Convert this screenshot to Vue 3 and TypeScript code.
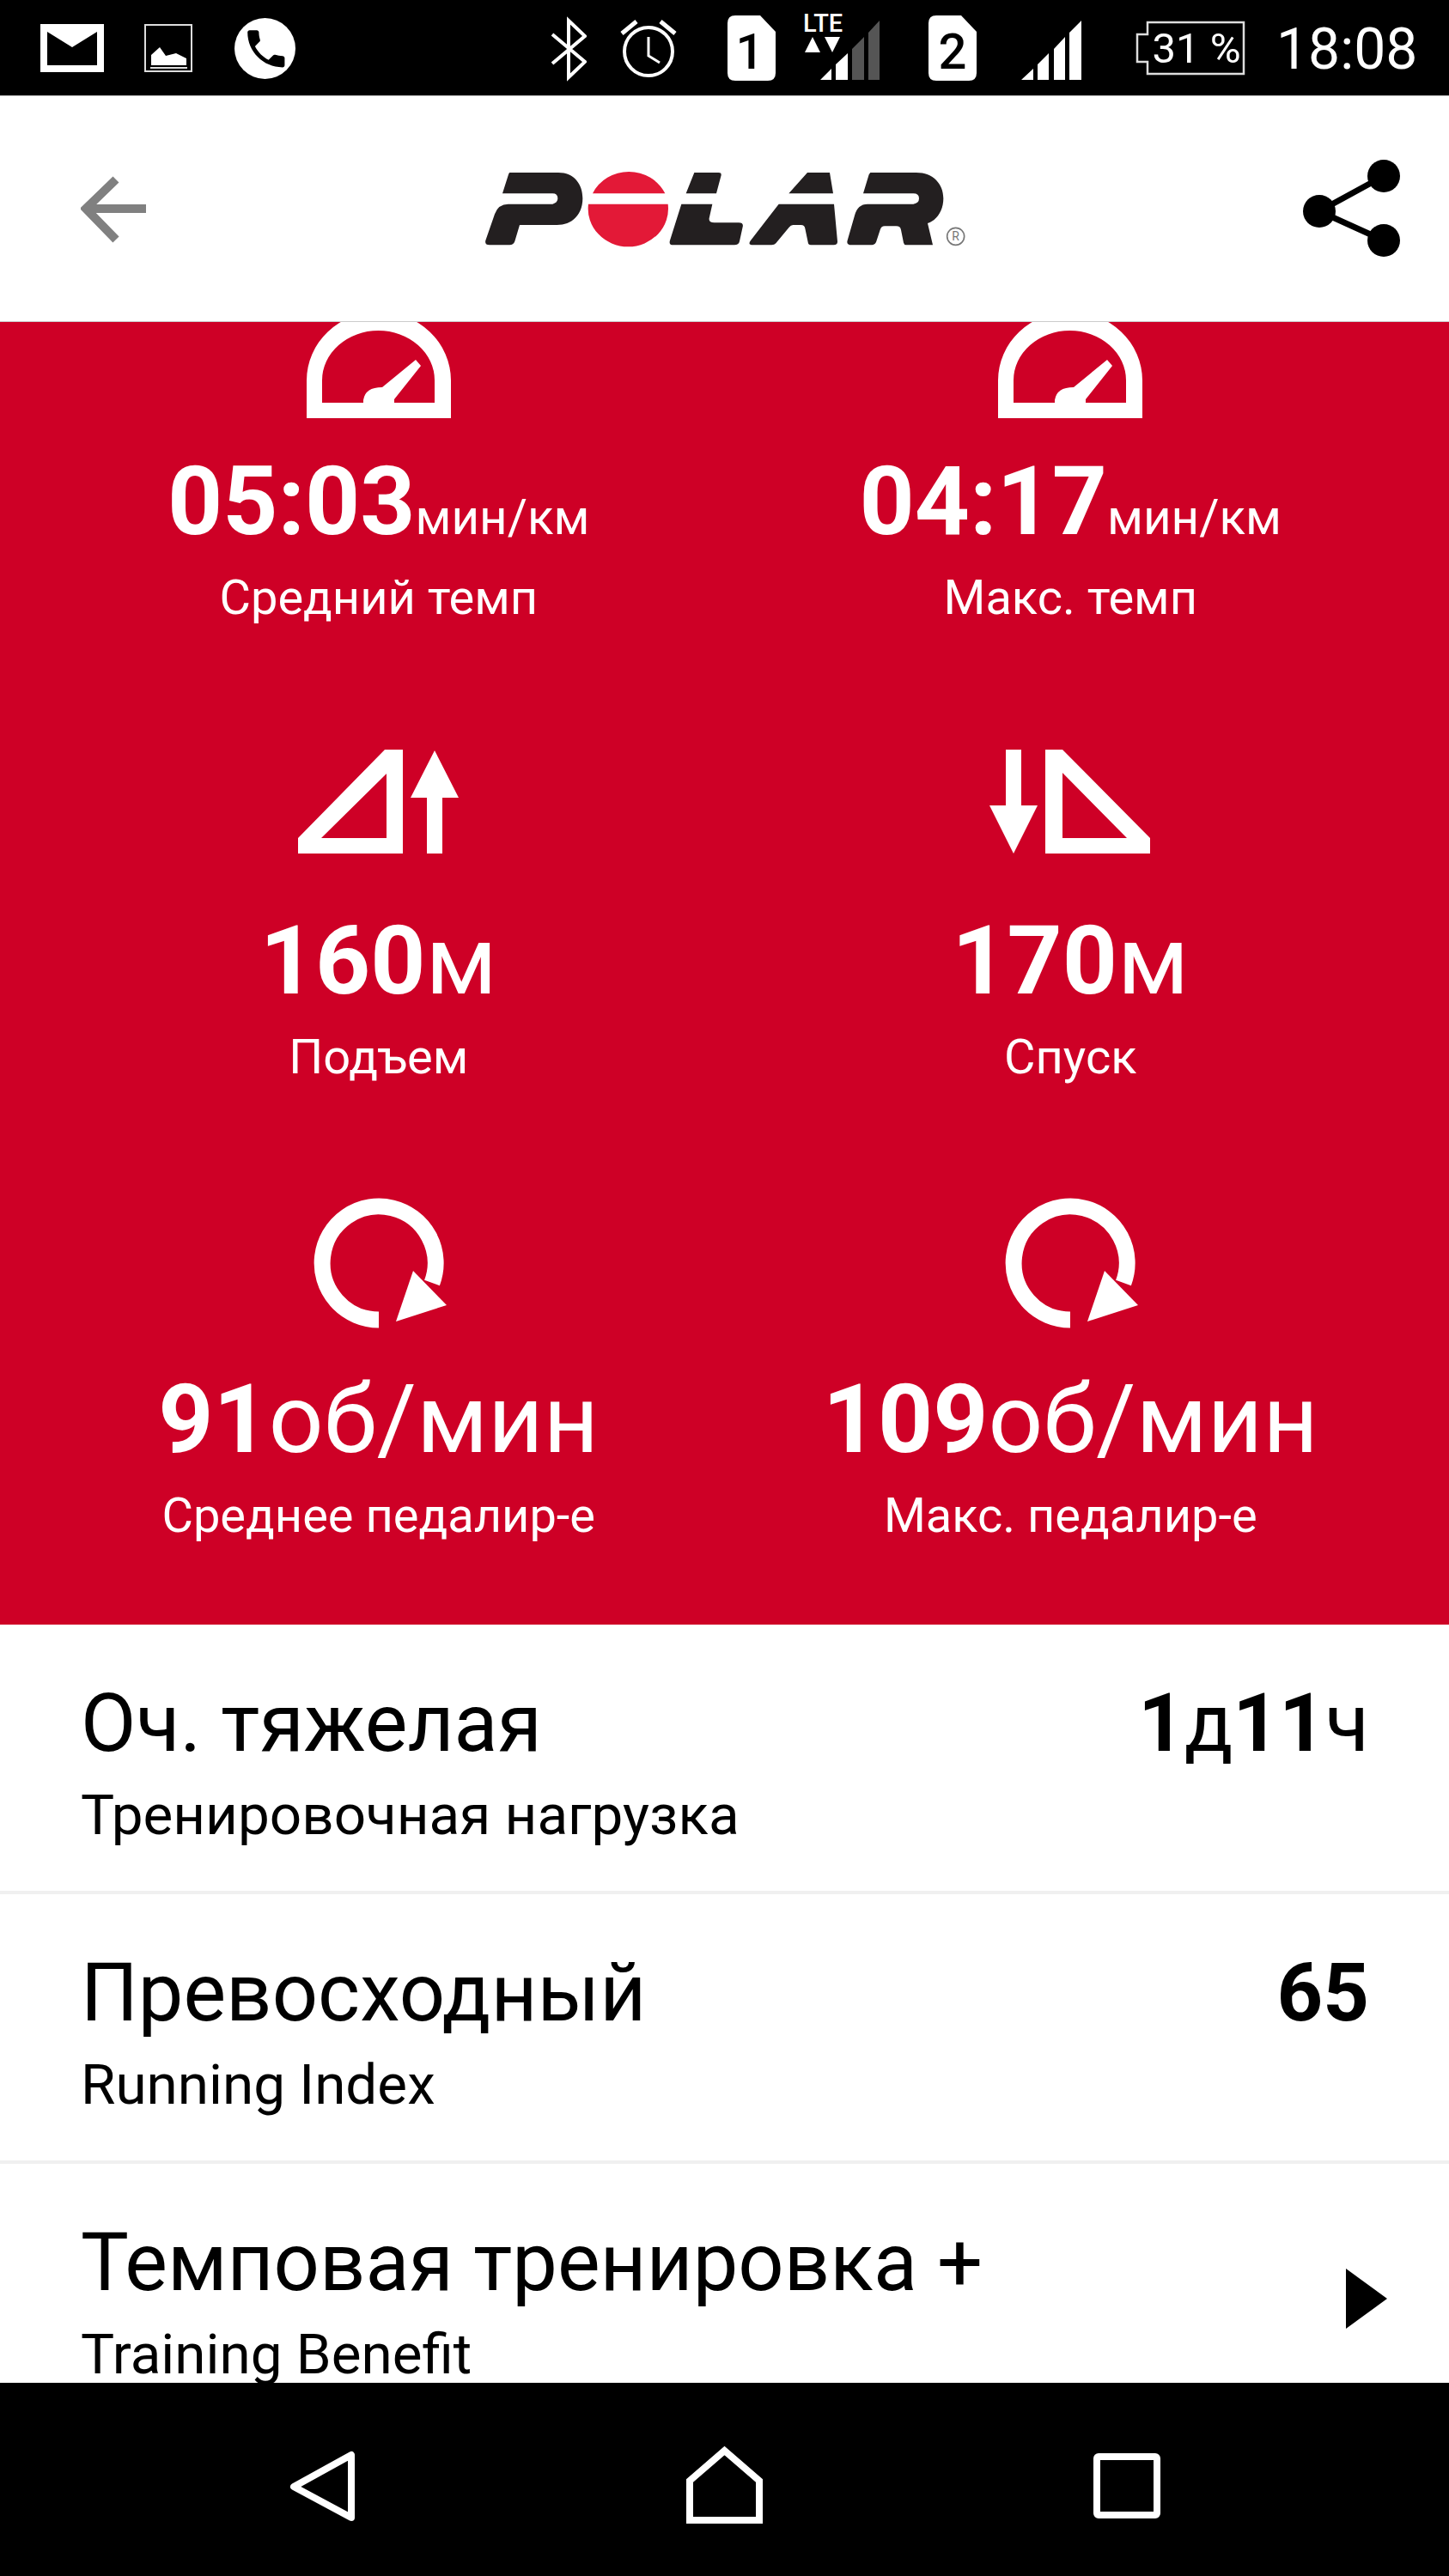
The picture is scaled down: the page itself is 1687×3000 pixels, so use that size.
<script setup lang="ts">
type Kind = 'pace' | 'up' | 'down' | 'rpm'

interface Stat {
  kind: Kind
  value: string
  unit: string
  label: string
  small?: boolean
}

interface Row {
  title: string
  sub: string
  value?: [string, string][]
  more?: boolean
}

const stats: Stat[] = [
  { kind: 'pace', value: '05:03', unit: 'мин/км', label: 'Средний темп', small: true },
  { kind: 'pace', value: '04:17', unit: 'мин/км', label: 'Макс. темп', small: true },
  { kind: 'up', value: '160', unit: 'м', label: 'Подъем' },
  { kind: 'down', value: '170', unit: 'м', label: 'Спуск' },
  { kind: 'rpm', value: '91', unit: 'об/мин', label: 'Среднее педалир-е' },
  { kind: 'rpm', value: '109', unit: 'об/мин', label: 'Макс. педалир-е' },
]

const rows: Row[] = [
  { title: 'Оч. тяжелая', sub: 'Тренировочная нагрузка', value: [['1', 'д'], ['11', 'ч']] },
  { title: 'Превосходный', sub: 'Running Index', value: [['65', '']] },
  { title: 'Темповая тренировка +', sub: 'Training Benefit', more: true },
]
</script>

<template>
  <div class="phone">
    <header class="status">
      <svg class="mail" width="74" height="111" viewBox="47 0 74 111">
        <rect x="47" y="28" width="74" height="56" fill="#fff" />
        <path d="M55 37 84 55 113 37V76H55Z" fill="#000" />
      </svg>
      <svg class="pic" width="56" height="111" viewBox="168 0 56 111">
        <rect x="169" y="29" width="54" height="54" fill="none" stroke="#ddd" stroke-width="2" />
        <path d="M176 76V64L186 55 193 65 205 62 217 68V76Z" fill="#fff" />
        <path d="M175 79H218" stroke="#ddd" stroke-width="2" />
      </svg>
      <svg class="call" width="71" height="111" viewBox="273 0 71 111">
        <ellipse cx="308.5" cy="56.5" rx="35.5" ry="35.5" fill="#fff" />
        <path
          transform="translate(281 28) scale(2.4)"
          d="M6.62 10.79c1.44 2.83 3.76 5.14 6.59 6.59l2.2-2.2c.27-.27.67-.36 1.02-.24 1.12.37 2.33.57 3.57.57.55 0 1 .45 1 1V20c0 .55-.45 1-1 1-9.39 0-17-7.61-17-17 0-.55.45-1 1-1h3.5c.55 0 1 .45 1 1 0 1.25.2 2.45.57 3.57.11.35.03.74-.25 1.02l-2.2 2.2z"
          fill="#000"
        />
      </svg>
      <svg class="bt" width="42" height="111" viewBox="641 0 42 111">
        <path d="M643 40 681 72 662 90V24L681 42 643 74" fill="none" stroke="#fff" stroke-width="4" />
      </svg>
      <svg class="alarm" width="70" height="111" viewBox="720 0 70 111">
        <circle cx="755" cy="60" r="28" fill="none" stroke="#fff" stroke-width="4" />
        <path d="M755 43V65L768 73" fill="none" stroke="#fff" stroke-width="3" />
        <path d="M724 39 741 25M769 25 786 39" stroke="#fff" stroke-width="5" />
      </svg>
      <svg class="sim-a" width="56" height="111" viewBox="847 0 56 111">
        <path d="M856 18H885L903 37V85Q903 94 894 94H856Q847 94 847 85V27Q847 18 856 18Z" fill="#fff" />
        <text x="873" y="80" text-anchor="middle" class="sim-no">1</text>
      </svg>
      <svg class="lte" width="90" height="111" viewBox="935 0 90 111">
        <text x="935" y="37" class="lte-text">LTE</text>
        <path d="M946 43 955 61H937ZM960 43H978L969 61Z" fill="#fff" />
        <path d="M955 93 968 80V93ZM973 75 987 62V93H973Z" fill="#fff" />
        <path d="M992 57 1006 43V93H992ZM1011 38 1024 24V93H1011Z" fill="#555" />
      </svg>
      <svg class="sim-b" width="56" height="111" viewBox="1081 0 56 111">
        <path d="M1090 18H1119L1137 37V85Q1137 94 1128 94H1090Q1081 94 1081 85V27Q1081 18 1090 18Z" fill="#fff" />
        <text x="1109" y="80" text-anchor="middle" class="sim-no">2</text>
      </svg>
      <svg class="bars" width="70" height="111" viewBox="1189 0 70 111">
        <path d="M1189 93 1203 80V93ZM1208 75 1221 62V93H1208ZM1227 57 1240 43V93H1227ZM1245 38 1259 24V93H1245Z" fill="#fff" />
      </svg>
      <svg class="batt" width="129" height="111" viewBox="1321 0 129 111">
        <path d="M1336 26H1448V86H1336V72H1324V40H1336Z" fill="none" stroke="#ddd" stroke-width="2.5" />
        <text x="1393" y="73" text-anchor="middle" class="batt-text">31 %</text>
      </svg>
      <span class="time">18:08</span>
    </header>

    <nav class="bar">
      <svg width="76" height="262" viewBox="94 112 76 262">
        <path d="M170 243H100M135 209 100 243 135 279" fill="none" stroke="#808080" stroke-width="10" />
      </svg>
      <svg class="logo" width="570" height="115" viewBox="0 0 1710 345">
        <path
          fill="#231f20"
          d="M100 45H270C325 45 355 85 355 135C355 190 320 228 265 228H135L118 285Q113 298 100 298H30Q12 298 16 282L48 190Q60 155 95 155H250Q268 150 268 135Q268 118 250 118H75L95 55Q98 45 100 45Z"
        />
        <path fill="#e31937" d="M390 118A140 133 0 0 1 643 118ZM375 155A140 133 0 1 0 653 155Z" />
        <path
          fill="#231f20"
          d="M745 45H830Q842 45 838 58L822 118H716ZM700 155H808L797 205Q795 220 815 220H900Q918 220 914 235L903 285Q900 298 885 298H672Q655 298 660 282Z"
        />
        <path
          fill="#231f20"
          d="M1140 45H1218L1230 118H1075ZM1040 155H1233L1245 285Q1246 298 1232 298H1152Q1143 298 1142 288L1132 240Q1130 228 1118 228H1090Q1082 228 1076 236L1030 292Q1025 298 1015 298H950Q930 298 942 282Z"
        />
        <path
          fill="#231f20"
          d="M1360 45H1520C1580 45 1615 85 1615 135C1615 175 1595 210 1560 222L1578 298H1485Q1478 298 1476 290L1467 245Q1465 232 1450 232H1410Q1398 232 1394 245L1380 288Q1376 298 1365 298H1295Q1275 298 1280 282L1305 195Q1315 155 1350 155H1510Q1530 152 1530 135Q1530 118 1510 118H1335L1355 52Z"
        />
        <circle cx="1658" cy="268" r="30" fill="none" stroke="#777" stroke-width="5" />
        <text x="1658" y="283" text-anchor="middle" class="reg">R</text>
      </svg>
      <svg class="share" width="130" height="262" viewBox="1510 112 130 262">
        <path d="M1611 205 1536 246 1611 280" fill="none" stroke="#000" stroke-width="7" />
        <circle cx="1611" cy="205" r="19" />
        <circle cx="1536" cy="246" r="19" />
        <circle cx="1611" cy="280" r="19" />
      </svg>
    </nav>

    <main class="content">
      <section class="stats">
        <div class="stats-grid">
          <div v-for="s in stats" :key="s.label" class="stat">
            <svg v-if="s.kind === 'pace'" width="200" height="190" viewBox="341 302 200 190" fill="#fff">
              <path
                fill-rule="evenodd"
                d="M357 487V443A84 80 0 0 1 525 443V487ZM375 469H506V443A65.5 58 0 0 0 375 443Z"
              />
              <path d="M445 451 484 419 490 426 459 465V469H423V466Q425 451 445 451Z" />
            </svg>
            <svg v-else-if="s.kind === 'up'" width="200" height="190" viewBox="341 836 200 190" fill="#fff">
              <path fill-rule="evenodd" d="M448 872H469V993H347V975ZM450 900 374 975H450Z" />
              <path d="M506 873 534 928H515V993H497V928H478Z" />
            </svg>
            <svg v-else-if="s.kind === 'down'" width="200" height="190" viewBox="1147 836 200 190" fill="#fff">
              <path d="M1172 872H1190V937H1209L1181 993 1153 937H1172Z" />
              <path fill-rule="evenodd" d="M1218 872H1238L1340 975V993H1218ZM1238 899V975H1313Z" />
            </svg>
            <svg v-else width="200" height="190" viewBox="340 1371 200 190" fill="#fff">
              <path d="M440 1537A66 66 0 1 1 502 1494" fill="none" stroke="#fff" stroke-width="19" />
              <path d="M460 1539 519 1520 480 1480Z" />
            </svg>
            <div class="num">
              <b>{{ s.value }}</b><span :class="{ 'unit-small': s.small }">{{ s.unit }}</span>
            </div>
            <div class="label">{{ s.label }}</div>
          </div>
        </div>
      </section>

      <div v-for="r in rows" :key="r.title" class="row">
        <div>
          <div class="title">{{ r.title }}</div>
          <div class="sub">{{ r.sub }}</div>
        </div>
        <div v-if="r.value" class="value">
          <template v-for="p in r.value" :key="p[0]"><b>{{ p[0] }}</b>{{ p[1] }}</template>
        </div>
        <svg v-if="r.more" class="more" width="48" height="70" viewBox="0 0 48 70">
          <path d="M0 0 48 35 0 70Z" />
        </svg>
      </div>
    </main>

    <footer class="softkeys">
      <svg width="77" height="100" viewBox="337 2845 77 100">
        <path d="M409 2859V2932L342 2896Z" fill="none" stroke="#fff" stroke-width="8" stroke-linejoin="round" />
      </svg>
      <svg width="89" height="100" viewBox="798 2845 89 100">
        <path d="M842.5 2854 883 2889V2935H802V2889Z" fill="none" stroke="#fff" stroke-width="8" />
      </svg>
      <svg width="78" height="100" viewBox="1274 2845 78 100">
        <rect x="1278" y="2861" width="70" height="68" rx="2" fill="none" stroke="#fff" stroke-width="8" />
      </svg>
    </footer>
  </div>
</template>

<style scoped>
.phone {
  display: flex;
  flex-direction: column;
  width: 1687px;
  height: 3000px;
  background: #fff;
  color: #000;
  font-family: Roboto, "Noto Sans", sans-serif;
  overflow: hidden;
}

.status {
  display: flex;
  flex: none;
  align-items: flex-start;
  height: 111px;
  padding-left: 47px;
  background: #000;
  border-bottom: 1px solid #bbb;
}

.status svg {
  flex: none;
}

.pic { margin-left: 47px; }
.call { margin-left: 49px; }
.bt { margin-left: 297px; }
.alarm { margin-left: 37px; }
.sim-a { margin-left: 57px; }
.lte { margin-left: 32px; }
.sim-b { margin-left: 56px; }
.bars { margin-left: 52px; }
.batt { margin-left: 62px; }

.sim-no {
  font-size: 58px;
  font-weight: 500;
  fill: #000;
}

.lte-text {
  font-size: 29px;
  font-weight: 500;
  fill: #fff;
}

.batt-text {
  font-size: 49px;
  fill: #fff;
}

.time {
  margin-left: 36px;
  color: #fff;
  font-size: 66px;
  line-height: 115px;
}

.bar {
  display: flex;
  flex: none;
  align-items: center;
  height: 262px;
  padding-left: 94px;
  border-bottom: 1px solid #ccc;
}

.logo { margin-left: 390px; }
.share { margin-left: 380px; }

.reg {
  font-size: 42px;
  fill: #777;
}

.content {
  flex: none;
  height: 2400px;
  overflow: hidden;
}

.stats {
  height: 1517px;
  padding: 0 38px;
  background: #ce0026;
  color: #fff;
  overflow: hidden;
}

/* list is scrolled, first row's icon is cut off by the toolbar */
.stats-grid {
  display: grid;
  grid-template-columns: 1fr 1fr;
  grid-auto-rows: 521px;
  row-gap: 13.5px;
  margin-top: -73px;
}

.stat {
  display: flex;
  flex-direction: column;
  align-items: center;
}

.stat svg {
  flex: none;
}

.num {
  margin-top: 27px;
  font-size: 112px;
  line-height: 130px;
  white-space: nowrap;
}

.num b {
  font-weight: 700;
}

.unit-small {
  font-size: 56.5px;
  line-height: 1;
}

.label {
  margin-top: 17px;
  font-size: 56px;
  line-height: 60px;
}

.row {
  display: flex;
  align-items: flex-start;
  justify-content: space-between;
  box-sizing: border-box;
  height: 314px;
  padding: 64.5px 93px 0 94px;
  border-bottom: 4px solid #f0f0f0;
}

.row:last-child {
  border-bottom: 0;
}

.title {
  font-size: 93.7px;
  line-height: 100px;
}

.sub {
  margin-top: 19px;
  font-size: 65.6px;
  line-height: 76px;
}

.value {
  font-size: 93.7px;
  line-height: 100px;
}

.value b {
  font-weight: 700;
}

.more {
  flex: none;
  align-self: center;
  margin-top: -64px;
  margin-right: -21px;
}

.softkeys {
  display: flex;
  flex: 1;
  justify-content: center;
  gap: 385px;
  padding-top: 70px;
  background: #000;
}

.softkeys svg {
  flex: none;
}
</style>

<style>
html,
body {
  margin: 0;
  background: #000;
}
</style>
